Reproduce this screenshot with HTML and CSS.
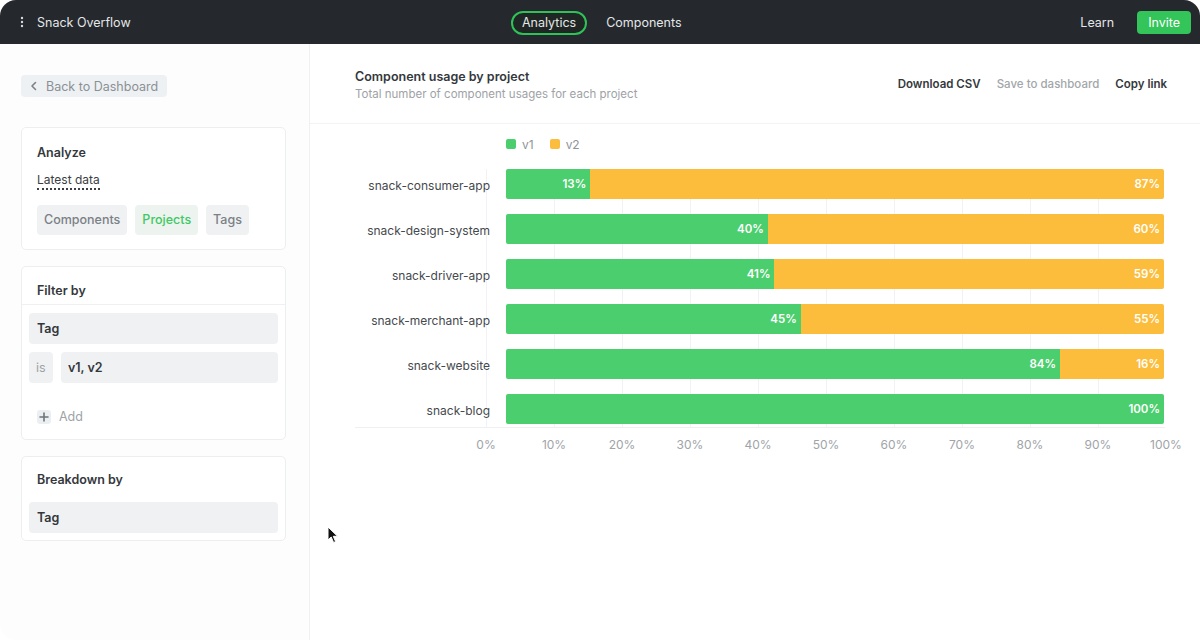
FILE: index.html
```html
<!DOCTYPE html>
<html>
<head>
<meta charset="utf-8">
<link rel="stylesheet" href="styles.css">
</head>
<body>
<div class="app">
  <header class="topbar">
    <div class="brand">
      <svg class="dots" width="4" height="12" viewBox="0 0 4 12"><circle cx="2" cy="2" r="1.2" fill="#d8dadc"/><circle cx="2" cy="6" r="1.2" fill="#d8dadc"/><circle cx="2" cy="10" r="1.2" fill="#d8dadc"/></svg>
      <span>Snack Overflow</span>
    </div>
    <nav class="nav">
      <span class="nav-item active">Analytics</span>
      <span class="nav-item">Components</span>
    </nav>
    <div class="top-right">
      <span class="learn">Learn</span>
      <span class="invite">Invite</span>
    </div>
  </header>
  <div class="body">
    <aside class="sidebar">
      <div class="back">
        <svg width="8" height="10" viewBox="0 0 8 10"><path d="M5.5 1.5 L2 5 L5.5 8.5" fill="none" stroke="#7d8287" stroke-width="1.6" stroke-linecap="round" stroke-linejoin="round"/></svg>
        <span>Back to Dashboard</span>
      </div>
      <section class="card analyze">
        <h3 class="card-title">Analyze</h3>
        <div class="latest"><span>Latest data</span></div>
        <div class="chips">
          <span class="chip">Components</span>
          <span class="chip chip-active">Projects</span>
          <span class="chip">Tags</span>
        </div>
      </section>
      <section class="card filter">
        <h3 class="card-title with-divider">Filter by</h3>
        <div class="fields">
          <div class="field">Tag</div>
          <div class="field-row">
            <div class="field op">is</div>
            <div class="field grow">v1, v2</div>
          </div>
          <div class="add">
            <span class="plus"><svg width="10" height="10" viewBox="0 0 10 10"><path d="M5 1v8M1 5h8" stroke="#6f747a" stroke-width="1.6" stroke-linecap="round"/></svg></span>
            <span>Add</span>
          </div>
        </div>
      </section>
      <section class="card breakdown">
        <h3 class="card-title">Breakdown by</h3>
        <div class="fields">
          <div class="field">Tag</div>
        </div>
      </section>
    </aside>
    <main class="main">
      <div class="chart-head">
        <div>
          <div class="chart-title">Component usage by project</div>
          <div class="chart-sub">Total number of component usages for each project</div>
        </div>
        <div class="actions">
          <span class="act">Download CSV</span>
          <span class="act muted">Save to dashboard</span>
          <span class="act">Copy link</span>
        </div>
      </div>
      <div class="chart">
        <div class="legend">
          <span class="lg"><i class="sw green"></i>v1</span>
          <span class="lg"><i class="sw yellow"></i>v2</span>
        </div>
        <div class="rows">
          <div class="grid"></div>
          <div class="row"><div class="label">snack-consumer-app</div><div class="bar"><div class="seg green" style="width:12.8%"><b>13%</b></div><div class="seg yellow" style="width:87.2%"><b>87%</b></div></div></div>
          <div class="row"><div class="label">snack-design-system</div><div class="bar"><div class="seg green" style="width:39.8%"><b>40%</b></div><div class="seg yellow" style="width:60.2%"><b>60%</b></div></div></div>
          <div class="row"><div class="label">snack-driver-app</div><div class="bar"><div class="seg green" style="width:40.8%"><b>41%</b></div><div class="seg yellow" style="width:59.2%"><b>59%</b></div></div></div>
          <div class="row"><div class="label">snack-merchant-app</div><div class="bar"><div class="seg green" style="width:44.8%"><b>45%</b></div><div class="seg yellow" style="width:55.2%"><b>55%</b></div></div></div>
          <div class="row"><div class="label">snack-website</div><div class="bar"><div class="seg green" style="width:84.2%"><b>84%</b></div><div class="seg yellow" style="width:15.8%"><b>16%</b></div></div></div>
          <div class="row"><div class="label">snack-blog</div><div class="bar"><div class="seg green" style="width:100%"><b>100%</b></div></div></div>
        </div>
        <div class="axis">
          <span>0%</span><span>10%</span><span>20%</span><span>30%</span><span>40%</span><span>50%</span><span>60%</span><span>70%</span><span>80%</span><span>90%</span><span>100%</span>
        </div>
      </div>
    </main>
  </div>
  <svg class="cursor" width="12" height="18" viewBox="0 0 12 18"><path d="M1 1 L1 14 L4.2 11 L6.6 16.5 L8.6 15.6 L6.3 10.3 L10.6 10.3 Z" fill="#111" stroke="#fff" stroke-width="1"/></svg>
</div>
</body>
</html>
```

FILE: styles.css
```css
* { box-sizing: border-box; }
html, body { margin: 0; padding: 0; background: #fff; }
body { font-family: Inter, "Noto Sans", sans-serif; color: #33373b; }

.app {
  position: relative;
  width: 1200px;
  height: 640px;
  border-radius: 16px;
  overflow: hidden;
  background: #fff;
  display: flex;
  flex-direction: column;
}

.topbar {
  height: 44px;
  background: #25292d;
  display: flex;
  align-items: center;
  padding: 0 9px 0 20px;
  position: relative;
  flex-shrink: 0;
}
.brand { display: flex; align-items: center; gap: 13px; color: #e4e6e8; font-size: 12.5px; flex: 1; }
.dots { display: block; }
.nav { display: flex; align-items: center; gap: 19px; position: absolute; left: 511px; top: 11px; }
.nav-item { color: #e4e6e8; font-size: 12.5px; line-height: 18px; }
.nav-item.active {
  border: 2px solid #2fc258;
  border-radius: 12px;
  padding: 1px 9px;
  background: #1f2623;
}
.top-right { display: flex; align-items: center; gap: 23px; }
.learn { color: #e4e6e8; font-size: 12.5px; }
.invite {
  background: #33c559;
  color: #fff;
  font-size: 12.5px;
  border-radius: 4px;
  height: 23px;
  line-height: 23px;
  padding: 0 11px;
}

.body { display: flex; flex: 1; min-height: 0; }

.sidebar {
  width: 310px;
  flex-shrink: 0;
  border-right: 1px solid #eff0f1;
  padding: 31px 23px 0 21px;
  background: #fdfdfd;
}
.back {
  display: inline-flex;
  align-items: center;
  gap: 8px;
  height: 22px;
  padding: 0 9px 0 9px;
  background: #eef1f3;
  border-radius: 4px;
  color: #8b9095;
  font-size: 12.5px;
}
.back svg { display: block; }

.card {
  border: 1px solid #eceef0;
  border-radius: 5px;
  background: #fff;
  margin-bottom: 16px;
}
.analyze { margin-top: 30px; padding: 16px 15px 14px 15px; }
.card-title { margin: 0; font-size: 12.5px; font-weight: 600; color: #34383c; line-height: 18px; }
.latest { margin-top: 10px; font-size: 12px; line-height: 16px; color: #3c4044; }
.latest span { border-bottom: 2px dotted #3c4044; padding-bottom: 1px; }
.chips { display: flex; gap: 8px; margin-top: 17px; }
.chip {
  height: 30px;
  line-height: 30px;
  padding: 0 7px;
  border-radius: 4px;
  background: #eff1f3;
  color: #7b8085;
  font-size: 12.5px;
  font-weight: 500;
}
.chip-active { background: #edf3ef; color: #3fc864; }

.filter { padding-top: 15px; }
.card-title.with-divider { padding: 0 15px 4px; border-bottom: 1px solid #eff0f1; }
.breakdown { padding-top: 14px; }
.breakdown .card-title { padding: 0 15px; }
.fields { padding: 8px 7px 7px 7px; display: flex; flex-direction: column; gap: 8px; }
.breakdown .fields { padding-top: 13px; }
.field {
  height: 31px;
  line-height: 31px;
  background: #eff1f3;
  border-radius: 4px;
  padding: 0 8px;
  font-size: 12.5px;
  font-weight: 600;
  color: #33373b;
}
.field-row { display: flex; gap: 8px; }
.field.op { width: 24px; padding: 0 7px; color: #9ea3a7; font-weight: 400; }
.field.grow { flex: 1; padding-left: 7px; }
.add { display: flex; align-items: center; gap: 8px; padding: 18px 8px 8px; color: #9ea3a7; font-size: 12.5px; }
.plus { width: 14px; height: 14px; background: #eceff1; border-radius: 3px; display: flex; align-items: center; justify-content: center; }
.plus svg { display: block; }

.main { flex: 1; min-width: 0; background: #fff; }
.chart-head {
  height: 80px;
  border-bottom: 1px solid #f2f3f4;
  padding: 25px 33px 0 45px;
  display: flex;
  justify-content: space-between;
  align-items: flex-start;
}
.chart-title { font-size: 12.5px; font-weight: 600; color: #34383c; line-height: 16px; }
.chart-sub { font-size: 11.5px; color: #9ea2a6; line-height: 18px; margin-top: 0; }
.actions { display: flex; gap: 16px; padding-top: 7px; }
.act { font-size: 11.5px; font-weight: 600; color: #34383c; line-height: 16px; }
.act.muted { color: #a2a6aa; font-weight: 500; }

.chart { padding: 12px 0 0 45px; }
.legend { display: flex; gap: 16px; padding-left: 151px; height: 16px; align-items: center; margin-bottom: 17px; }
.lg { display: flex; align-items: center; gap: 6px; font-size: 12px; color: #8f9498; }
.sw { display: inline-block; width: 10px; height: 10px; border-radius: 2px; }
.sw.green, .seg.green { background: #4bce6d; }
.sw.yellow, .seg.yellow { background: #fbbd3b; }

.rows {
  position: relative;
  border-bottom: 1px solid #eef0f1;
  padding-bottom: 3px;
  width: 810px;
}
.grid {
  position: absolute;
  left: 131px;
  top: 0;
  bottom: 0;
  width: 680px;
  background-image: linear-gradient(to right, #f1f2f3 1px, transparent 1px);
  background-size: 68px 100%;
  background-position: 68px 0;
  background-repeat: repeat-x;
  z-index: 0;
}
.row { display: flex; align-items: center; height: 30px; margin-bottom: 15px; position: relative; z-index: 1; }
.row:last-child { margin-bottom: 0; }
.label { width: 151px; padding-right: 16px; text-align: right; font-size: 12px; color: #45494d; padding-top: 2px; }
.bar { width: 658px; height: 30px; display: flex; }
.seg { height: 100%; display: flex; align-items: center; justify-content: flex-end; padding-right: 4px; }
.seg:first-child { border-radius: 2px 0 0 2px; }
.seg:last-child { border-radius: 0 2px 2px 0; }
.seg:only-child { border-radius: 2px; }
.seg b { color: #fff; font-size: 11.5px; font-weight: 600; }

.axis { display: flex; margin-left: 97px; margin-top: 9px; }
.axis span { width: 68px; text-align: center; font-size: 12px; color: #a0a4a8; }

.cursor { position: absolute; left: 327px; top: 526px; }
```
